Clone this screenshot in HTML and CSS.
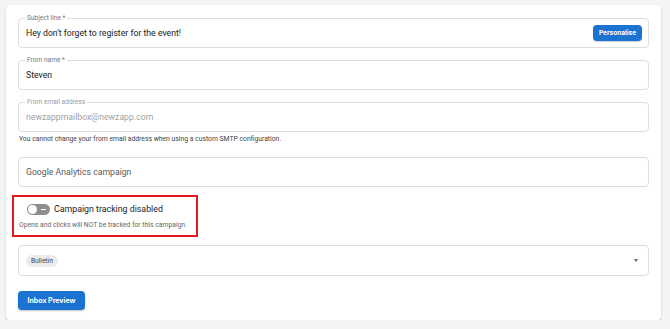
FILE: index.html
```html
<!DOCTYPE html>
<html lang="en">

<head>
    <meta charset="UTF-8">
    <meta name="viewport" content="width=device-width, initial-scale=1.0">
    <link rel="stylesheet" href="styles.css">
</head>

<body>
    <div class="card">
        <div class="field">
            <span class="field-label">Subject line *</span>
            <span class="field-value">Hey don't forget to register for the event!</span>
            <button class="personalise-btn">Personalise</button>
        </div>

        <div class="field gap">
            <span class="field-label">From name *</span>
            <span class="field-value">Steven</span>
        </div>

        <div class="field gap disabled">
            <span class="field-label">From email address</span>
            <span class="field-value">newzappmailbox@newzapp.com</span>
        </div>
        <p class="helper">You cannot change your from email address when using a custom SMTP configuration.</p>

        <div class="field ga">
            <span class="field-value placeholder">Google Analytics campaign</span>
        </div>

        <div class="tracking-box">
            <div class="toggle-row">
                <span class="toggle"><span class="knob"></span><span class="dash"></span></span>
                <span class="toggle-text">Campaign tracking disabled</span>
            </div>
            <p class="tracking-help">Opens and clicks will NOT be tracked for this campaign.</p>
        </div>

        <div class="field select">
            <span class="chip">Bulletin</span>
            <span class="arrow"></span>
        </div>

        <div class="actions">
            <button class="preview-btn">Inbox Preview</button>
        </div>
    </div>
</body>

</html>
```

FILE: styles.css
```css
body {
    margin: 0;
    background-color: #f4f4f4;
    font-family: 'Roboto', 'Liberation Sans', sans-serif;
}

.card {
    margin: 5px 0 0 6px;
    width: 655px;
    height: 315px;
    box-sizing: border-box;
    padding: 13px 12px 12px 12px;
    background-color: #fff;
    border-radius: 4px;
    box-shadow: 0 1px 2px rgba(0, 0, 0, 0.22);
}

.field {
    position: relative;
    display: flex;
    align-items: center;
    height: 30px;
    box-sizing: border-box;
    padding: 0 6px 0 7px;
    border: 1px solid #dedede;
    border-radius: 4px;
}

.field.gap {
    margin-top: 12px;
}

.field-label {
    position: absolute;
    top: -5px;
    left: 6px;
    padding: 0 2px;
    background-color: #fff;
    font-size: 6.6px;
    line-height: 8px;
    color: #777;
}

.field-value {
    flex: 1;
    font-size: 8.7px;
    color: #222;
}

.disabled .field-value {
    color: #a2a2a2;
}

.disabled .field-label {
    color: #9a9a9a;
}

.placeholder {
    color: #5a5a5a;
}

.personalise-btn {
    height: 16px;
    width: 49px;
    padding: 0;
    border: none;
    border-radius: 4px;
    background-color: #1a73d1;
    color: #fff;
    font-family: 'Inter', 'Roboto', sans-serif;
    font-size: 6.5px;
    font-weight: 700;
    box-shadow: 0 1px 1px rgba(0, 0, 0, 0.2);
}

.helper {
    margin: 3px 0 0 1px;
    font-size: 6.8px;
    line-height: 9px;
    color: #444;
}

.field.ga {
    margin-top: 13px;
}

.tracking-box {
    margin: 8px 0 0 -6px;
    width: 186px;
    height: 42px;
    box-sizing: border-box;
    border: 2px solid #e3191d;
    padding: 5px 0 0 5px;
}

.toggle-row {
    display: flex;
    align-items: center;
    gap: 4px;
    height: 14px;
    padding-left: 8px;
}

.toggle {
    position: relative;
    display: inline-block;
    width: 23px;
    height: 11px;
    border-radius: 6px;
    background-color: #8e8e8e;
}

.knob {
    position: absolute;
    top: 1px;
    left: 1px;
    width: 9px;
    height: 9px;
    border-radius: 50%;
    background-color: #fff;
}

.dash {
    position: absolute;
    top: 5px;
    left: 14px;
    width: 5px;
    height: 1px;
    background-color: #fff;
}

.toggle-text {
    font-size: 8.8px;
    color: #222;
}

.tracking-help {
    margin: 5px 0 0 0;
    font-size: 6.8px;
    line-height: 9px;
    color: #666;
}

.field.select {
    margin-top: 8px;
    height: 31px;
}

.chip {
    display: inline-block;
    padding: 0 5px;
    height: 12px;
    line-height: 12px;
    border-radius: 6px;
    background-color: #ececec;
    font-family: 'Inter', 'Roboto', sans-serif;
    font-size: 6.3px;
    color: #333;
}

.arrow {
    margin-left: auto;
    margin-right: 4px;
    width: 0;
    height: 0;
    border-left: 2.5px solid transparent;
    border-right: 2.5px solid transparent;
    border-top: 3px solid #666;
}

.actions {
    margin-top: 12px;
}

.preview-btn {
    width: 67px;
    height: 19px;
    padding: 0;
    border: none;
    border-radius: 4px;
    background-color: #1a73d1;
    color: #fff;
    font-family: 'Inter', 'Roboto', sans-serif;
    font-size: 7px;
    font-weight: 700;
    box-shadow: 0 1px 2px rgba(0, 0, 0, 0.25);
}
```
